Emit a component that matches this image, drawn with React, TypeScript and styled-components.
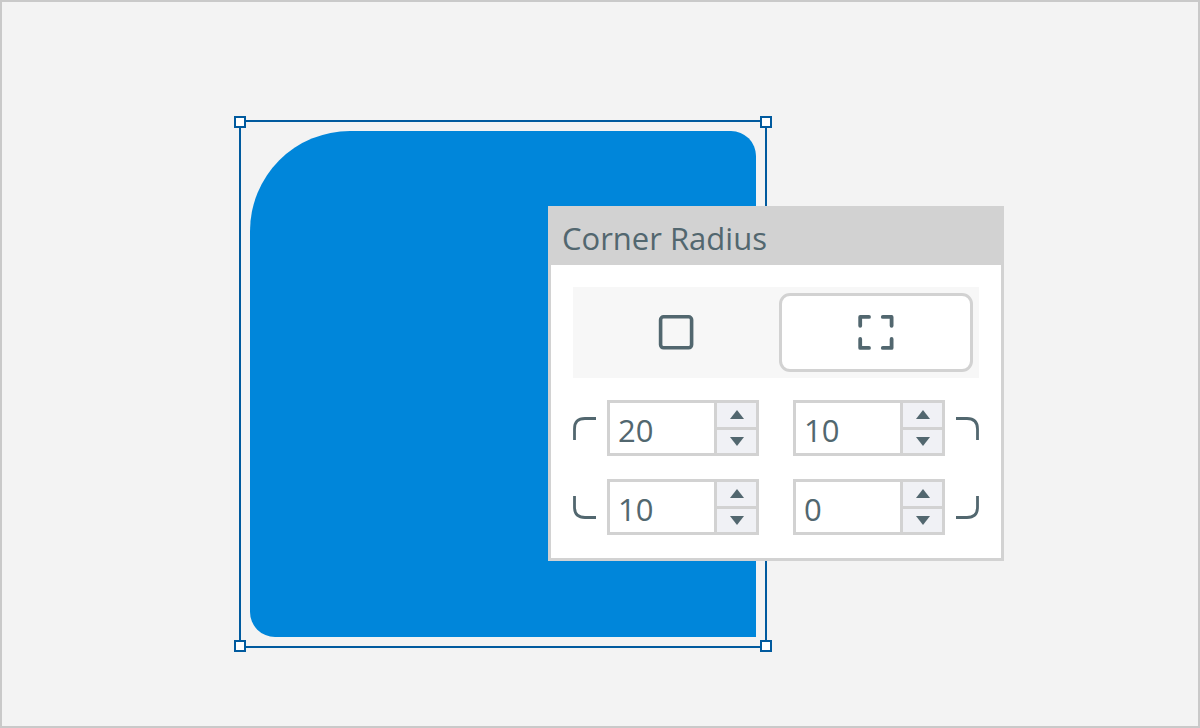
import React, { useState } from "react";
import styled, { createGlobalStyle } from "styled-components";

const ink = "#52676f";
const line = "#d2d2d2";
const outline = "#005a9e";

const GlobalStyle = createGlobalStyle`
  *, *::before, *::after { box-sizing: border-box; }
  body {
    margin: 0;
    color: ${ink};
    font-family: "Open Sans", "Noto Sans", sans-serif;
  }
  button, input { font: inherit; color: inherit; }
`;

const Canvas = styled.main`
  position: relative;
  min-height: 100vh;
  overflow: hidden;
  background: #f3f3f3;
  border: 2px solid #c9c9c9;
`;

const Selection = styled.div`
  position: absolute;
  left: 237px;
  top: 118px;
  padding: 9px;
  border: 2px solid ${outline};
`;

const Shape = styled.div`
  width: 506px;
  height: 506px;
  background: #0086da;
`;

const Handle = styled.span<{ $v: "top" | "bottom"; $h: "left" | "right" }>`
  position: absolute;
  ${(p) => p.$v}: -6px;
  ${(p) => p.$h}: -7px;
  width: 12px;
  height: 12px;
  background: #fff;
  border: 2px solid ${outline};
`;

const Panel = styled.section`
  position: absolute;
  left: 546px;
  top: 204px;
  width: 456px;
  background: #fff;
  border: 3px solid ${line};
`;

const Title = styled.h1`
  margin: 0;
  padding: 7px 11px 5px;
  background: ${line};
  font-size: 31px;
  font-weight: 400;
  line-height: 44px;
`;

const Content = styled.div`
  display: flex;
  flex-direction: column;
  gap: 22px;
  padding: 22px 22px 23px;
`;

const Segments = styled.div`
  display: flex;
  gap: 6px;
  height: 91px;
  padding: 6px;
  background: #f7f7f7;
`;

const Segment = styled.button<{ $active: boolean }>`
  flex: 1;
  display: flex;
  align-items: center;
  justify-content: center;
  padding: 0;
  cursor: pointer;
  border: 3px solid ${(p) => (p.$active ? line : "transparent")};
  border-radius: 11px;
  background: ${(p) => (p.$active ? "#fff" : "transparent")};
`;

const Fields = styled.div`
  display: grid;
  grid-template-columns: repeat(2, minmax(0, 1fr));
  gap: 23px 34px;
`;

const Field = styled.div<{ $reverse: boolean }>`
  display: flex;
  flex-direction: ${(p) => (p.$reverse ? "row-reverse" : "row")};
  align-items: center;
  gap: 11px;
`;

const CornerLabel = styled.label`
  display: flex;
`;

const Spinner = styled.div`
  flex: 1;
  display: flex;
  min-width: 0;
  height: 56px;
  border: 3px solid ${line};
`;

const NumberInput = styled.input`
  flex: 1;
  min-width: 0;
  height: 100%;
  padding: 4px 8px 0;
  border: 0;
  outline: 0;
  background: #fff;
  font-size: 31px;
`;

const Steps = styled.div`
  display: grid;
  flex: none;
  grid-template-rows: 1fr 1fr;
  gap: 3px;
  width: 42px;
  padding-left: 3px;
  background: ${line};
`;

const Step = styled.button`
  display: flex;
  align-items: center;
  justify-content: center;
  padding: 0;
  border: 0;
  cursor: pointer;
  background: #f0f1f5;
`;

const cornerPaths = {
  topLeft: "M1.5 23V12Q1.5 1.5 12 1.5H23",
  topRight: "M0 1.5H11Q21.5 1.5 21.5 12V23",
  bottomLeft: "M1.5 0V11Q1.5 21.5 12 21.5H23",
  bottomRight: "M0 21.5H11Q21.5 21.5 21.5 11V0",
};

type Corner = keyof typeof cornerPaths;

const corners: { id: Corner; name: string; right: boolean }[] = [
  { id: "topLeft", name: "Top left radius", right: false },
  { id: "topRight", name: "Top right radius", right: true },
  { id: "bottomLeft", name: "Bottom left radius", right: false },
  { id: "bottomRight", name: "Bottom right radius", right: true },
];

const Arrow = ({ down = false }: { down?: boolean }) => (
  <svg width="14" height="9" viewBox="0 0 14 9" aria-hidden="true">
    <path d={down ? "M0 0H14L7 9Z" : "M0 9H14L7 0Z"} fill={ink} />
  </svg>
);

const curve = (value: number) => (value * value) / 4;

export default function App() {
  const [separate, setSeparate] = useState(true);
  const [radii, setRadii] = useState<Record<Corner, number>>({
    topLeft: 20,
    topRight: 10,
    bottomLeft: 10,
    bottomRight: 0,
  });

  const update = (id: Corner, next: number) => {
    const value = Math.max(0, Math.min(40, next || 0));
    setRadii((r) =>
      separate
        ? { ...r, [id]: value }
        : { topLeft: value, topRight: value, bottomLeft: value, bottomRight: value }
    );
  };

  const borderRadius = [radii.topLeft, radii.topRight, radii.bottomRight, radii.bottomLeft]
    .map((r) => `${curve(r)}px`)
    .join(" ");

  return (
    <>
      <GlobalStyle />
      <Canvas>
        <Selection>
          <Shape style={{ borderRadius }} />
          <Handle $v="top" $h="left" />
          <Handle $v="top" $h="right" />
          <Handle $v="bottom" $h="left" />
          <Handle $v="bottom" $h="right" />
        </Selection>
        <Panel>
          <Title>Corner Radius</Title>
          <Content>
            <Segments>
              <Segment
                type="button"
                $active={!separate}
                aria-pressed={!separate}
                aria-label="Same radius for all corners"
                onClick={() => setSeparate(false)}
              >
                <svg width="36" height="36" viewBox="0 0 36 36" fill="none" stroke={ink} strokeWidth="3.6">
                  <rect x="2.6" y="1.8" width="31" height="31" rx="3" />
                </svg>
              </Segment>
              <Segment
                type="button"
                $active={separate}
                aria-pressed={separate}
                aria-label="Separate radius for each corner"
                onClick={() => setSeparate(true)}
              >
                <svg
                  width="36"
                  height="36"
                  viewBox="0 0 36 36"
                  fill="none"
                  stroke={ink}
                  strokeWidth="3.8"
                  strokeLinecap="round"
                  strokeLinejoin="round"
                >
                  <path d="M2.2 10.8V1.9H11M24.8 1.9H33.6V10.8M33.6 24V32.9H24.8M11 32.9H2.2V24" />
                </svg>
              </Segment>
            </Segments>
            <Fields>
              {corners.map(({ id, name, right }) => (
                <Field key={id} $reverse={right}>
                  <CornerLabel htmlFor={id} aria-label={name}>
                    <svg width="23" height="23" viewBox="0 0 23 23" fill="none" stroke={ink} strokeWidth="2.8">
                      <path d={cornerPaths[id]} />
                    </svg>
                  </CornerLabel>
                  <Spinner>
                    <NumberInput
                      id={id}
                      inputMode="numeric"
                      aria-label={name}
                      value={radii[id]}
                      onChange={(e) => update(id, Number(e.target.value))}
                    />
                    <Steps>
                      <Step type="button" aria-label={`Increase ${name}`} onClick={() => update(id, radii[id] + 1)}>
                        <Arrow />
                      </Step>
                      <Step type="button" aria-label={`Decrease ${name}`} onClick={() => update(id, radii[id] - 1)}>
                        <Arrow down />
                      </Step>
                    </Steps>
                  </Spinner>
                </Field>
              ))}
            </Fields>
          </Content>
        </Panel>
      </Canvas>
    </>
  );
}
